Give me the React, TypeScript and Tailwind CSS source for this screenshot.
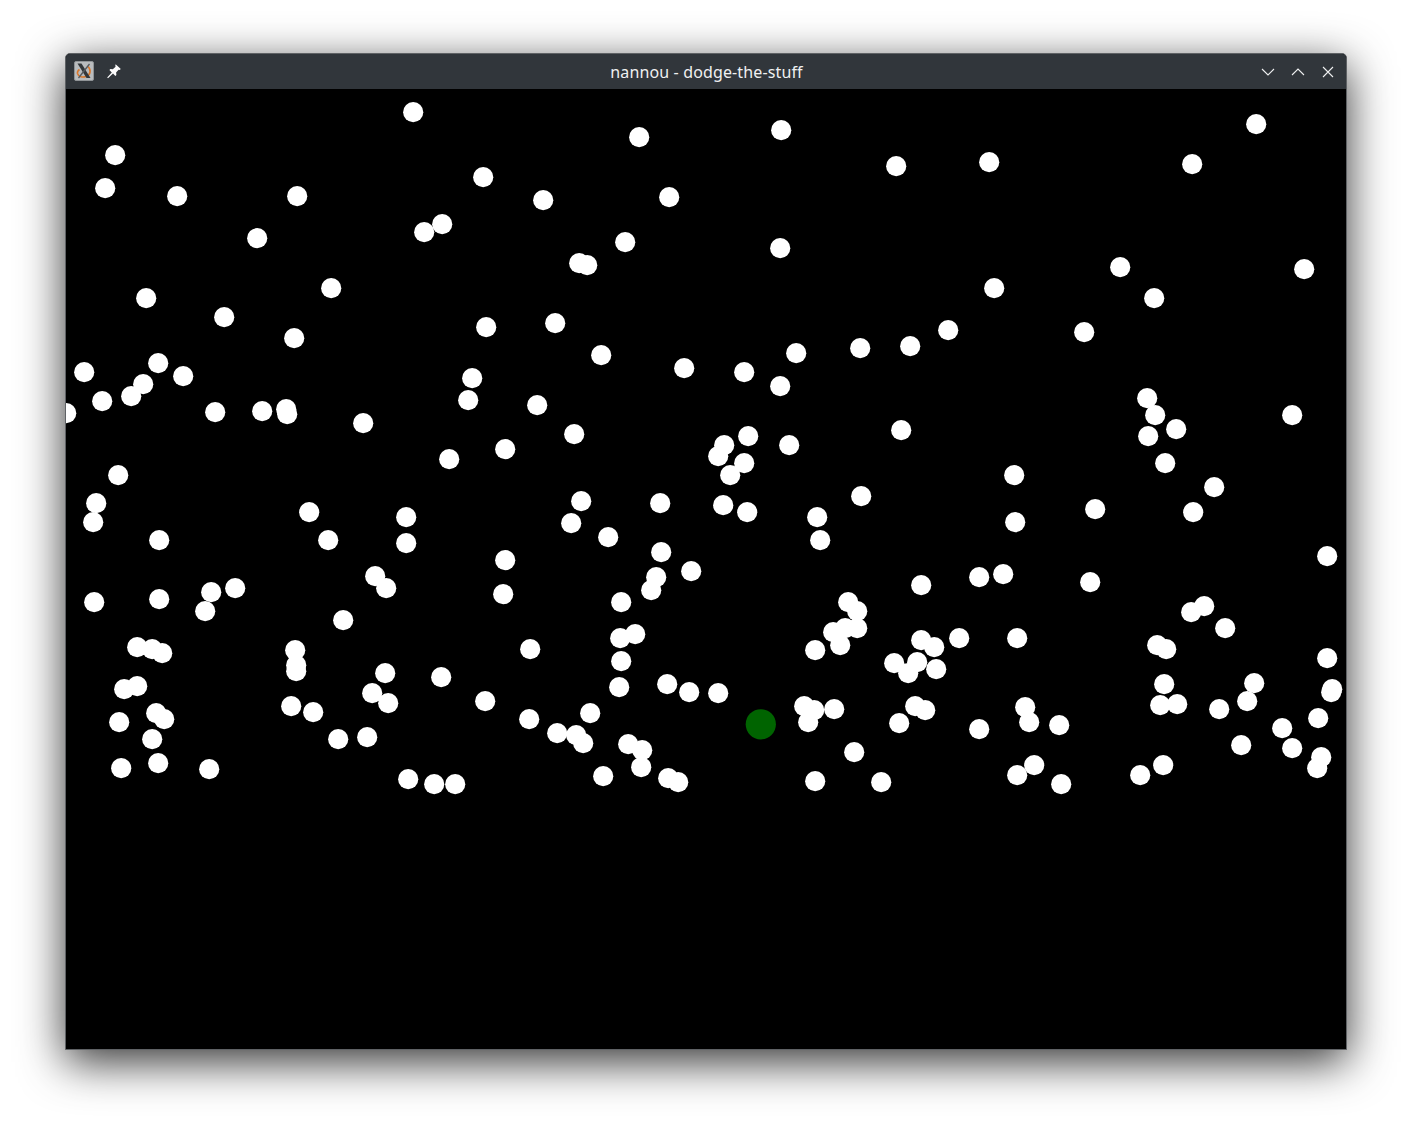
const CIRCLES: [number, number][] = [
  [413, 112], [639, 137], [781, 130], [1256, 124], [115, 155], [105, 188], [177, 196], [297, 196], [483, 177],
  [543, 200], [669, 197], [896, 166], [989, 162], [1192, 164], [257, 238], [424, 232], [442, 224], [625, 242],
  [579, 263], [587, 265], [780, 248], [1120, 267], [1304, 269], [331, 288], [146, 298], [994, 288], [1154, 298],
  [224, 317], [294, 338], [486, 327], [555, 323], [601, 355], [948, 330], [1084, 332], [860, 348], [910, 346],
  [796, 353], [84, 372], [158, 363], [183, 376], [143, 384], [131, 396], [102, 401], [472, 378], [468, 400],
  [684, 368], [744, 372], [780, 386], [66, 413], [215, 412], [262, 411], [286, 409], [287, 414], [363, 423],
  [537, 405], [1147, 398], [1155, 415], [1176, 429], [1148, 436], [1292, 415], [574, 434], [901, 430], [748, 436],
  [724, 445], [789, 445], [718, 456], [744, 463], [730, 475], [505, 449], [449, 459], [1165, 463], [118, 475],
  [1014, 475], [1214, 487], [861, 496], [581, 501], [660, 503], [723, 505], [747, 512], [96, 503], [93, 522],
  [309, 512], [406, 517], [571, 523], [817, 517], [1015, 522], [1095, 509], [1193, 512], [159, 540], [328, 540],
  [406, 543], [608, 537], [820, 540], [505, 560], [661, 552], [691, 571], [1327, 556], [375, 576], [386, 588],
  [656, 577], [651, 590], [235, 588], [211, 592], [159, 599], [94, 602], [205, 611], [503, 594], [621, 602],
  [921, 585], [979, 577], [1003, 574], [1090, 582], [848, 602], [857, 611], [343, 620], [1204, 606], [1191, 612],
  [1225, 628], [857, 628], [845, 628], [833, 632], [840, 645], [815, 650], [635, 634], [620, 638], [137, 647],
  [152, 649], [162, 653], [295, 650], [296, 665], [296, 671], [530, 649], [921, 640], [934, 647], [959, 638],
  [1017, 638], [1157, 645], [1166, 649], [621, 661], [894, 663], [917, 662], [908, 673], [936, 669], [1327, 658],
  [385, 673], [441, 677], [124, 689], [137, 686], [372, 693], [388, 703], [619, 687], [667, 684], [689, 692],
  [718, 693], [1164, 684], [1254, 683], [1332, 689], [1331, 692], [485, 701], [291, 706], [313, 712], [156, 713],
  [164, 719], [119, 722], [590, 713], [529, 719], [804, 706], [814, 710], [834, 709], [808, 722], [915, 706],
  [925, 710], [899, 723], [1025, 707], [1029, 722], [1059, 725], [1160, 705], [1177, 704], [1219, 709], [1247, 701],
  [1318, 718], [1282, 728], [557, 733], [576, 735], [583, 743], [338, 739], [367, 737], [152, 739], [979, 729],
  [628, 744], [642, 750], [1241, 745], [1292, 748], [854, 752], [1321, 757], [1317, 768], [158, 763], [121, 768],
  [209, 769], [641, 767], [1034, 765], [1163, 765], [1140, 775], [1017, 775], [603, 776], [408, 779], [434, 784],
  [455, 784], [668, 778], [678, 782], [815, 781], [881, 782], [1061, 784],
];

const AppIcon = () => (
  <div className="w-5 h-5 -mt-px rounded-[2px] bg-[#b9bcbe] border border-[#8f9396] flex items-center justify-center">
    <svg width="18" height="18" viewBox="0 0 18 18" className="shrink-0">
      <path d="M13 4.5C16.5 8 15.5 13 11 14.5C7.5 15.5 3.5 15 2.5 11.5C2.2 10 3 8.5 4.5 7.5" fill="none" stroke="#d9772b" strokeWidth="1.6" />
      <path d="M2.5 1.5h4l9 14.5h-4z" fill="#33373a" />
      <path d="M14.5 2L3.5 16" stroke="#55595c" strokeWidth="1.3" />
    </svg>
  </div>
);

const PinIcon = () => (
  <svg width="16" height="16" viewBox="0 0 16 16" fill="#fcfcfc" className="-mt-0.5 ml-px">
    <path d="M9.6 1.2l5.2 4.8-1.2 1.1-1-.3-2.5 2.8.3 2.4-1 1-2.4-2.4-5 4.6-.8-.8 4.6-5-2.4-2.4 1-1 2.4.3 2.8-2.5-.3-1z" />
  </svg>
);

const WindowButton = ({ d }: { d: string }) => (
  <svg width="14" height="14" viewBox="0 0 14 14" fill="none" stroke="#eff0f1" strokeWidth="1.1">
    <path d={d} />
  </svg>
);

const App = () => {
  return (
    <div className="w-[1412px] h-[1127px] bg-white overflow-hidden pl-[65px] pt-[53px]">
      <div className="w-[1282px] h-[997px] flex flex-col border border-[#5f6265] rounded-t-[5px] bg-black shadow-[0_12px_45px_rgba(0,0,0,0.8)]">
        <div className="h-[35px] shrink-0 flex items-center justify-between bg-[#31363b] rounded-t-[4px] pl-2 pr-[11px] font-['Noto_Sans',sans-serif]">
          <div className="flex items-center gap-[11px] w-[204px]">
            <AppIcon />
            <PinIcon />
          </div>
          <span className="text-[16px] tracking-[0.13px] text-[#eff0f1]">nannou - dodge-the-stuff</span>
          <div className="flex items-center justify-end gap-4 w-[200px]">
            <WindowButton d="M1 4l6 6 6-6" />
            <WindowButton d="M1 10l6-6 6 6" />
            <WindowButton d="M2 2l10 10M12 2L2 12" />
          </div>
        </div>
        <svg className="block w-[1280px] h-[960px]" viewBox="66 89 1280 960">
          <g transform="translate(0.2 0.2)">
            {CIRCLES.map(([x, y], i) => (
              <circle key={i} cx={x} cy={y} r="10.1" fill="#fff" />
            ))}
          </g>
          <circle cx="760.8" cy="724.3" r="15.1" fill="#006400" />
        </svg>
      </div>
    </div>
  );
};

export default App;
